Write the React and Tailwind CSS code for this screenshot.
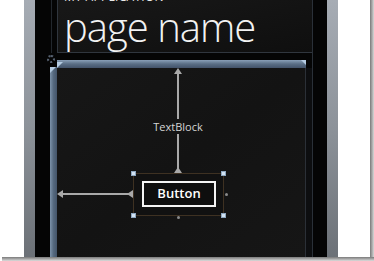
import React from 'react';

const Tri = ({ className }) => <div className={`absolute bg-[#a9a9a9] ${className}`} />;

export default function App() {
  return (
    <div className="w-[374px] h-[261px] bg-white overflow-hidden font-['Open_Sans',sans-serif]">
      <div className="w-[374px] h-[261px] flex flex-col">
        <div className="flex h-[257px]">
          <div className="w-[370px] h-full bg-white pl-[24px] flex">
            {/* phone bezel */}
            <div className="w-[314px] h-full px-[11px] bg-gradient-to-b from-[#a6acb4] via-[#8c9299] to-[#6c7177] flex">
              <div className="relative flex-1 h-full bg-[#050505] flex">
                <div className="w-[15px]" />
                <div className="w-[263px] h-full border-r border-[#2a3038] flex flex-col">
                  {/* header */}
                  <div className="h-[53px] flex ml-[1px] border-l border-[#22272d] pl-[5px]">
                    <div className="flex-1 border-l border-b border-[#30363e] bg-gradient-to-br from-[#181818] to-[#0f0f0f] overflow-hidden pl-[6px]">
                      <div className="text-[12px] leading-[12px] text-[#e8e8e8] tracking-wide mt-[-9px]">MY APPLICATION</div>
                      <div className="text-[40px] leading-[40px] font-light text-[#f2f2f2] mt-[4px] tracking-[-1px]">page name</div>
                    </div>
                  </div>
                  <div className="h-[7px]" />
                  {/* content */}
                  <div className="flex-1 flex">
                    <div className="w-[7px] flex flex-col">
                      <div className="h-[7px]" />
                      <div className="relative flex-1 bg-gradient-to-r from-[#7d93ab] via-[#55697f] to-[#44556a]">
                        <div className="absolute left-0 top-0 w-[6px] h-[6px] bg-[#b4cbe2] [clip-path:polygon(0_0,100%_0,0_100%)]" />
                      </div>
                    </div>
                    <div className="flex-1 flex flex-col">
                      <div className="relative w-[249px] h-[8px] bg-gradient-to-b from-[#8aa0b8] via-[#5a6e85] to-[#43536a]">
                        <div className="absolute left-0 top-[2px] w-[6px] h-[6px] bg-[#b4cbe2] [clip-path:polygon(0_0,100%_0,0_100%)]" />
                        <div className="absolute right-0 top-0 w-[5px] h-[5px] bg-[#b4cbe2] [clip-path:polygon(0_0,100%_0,100%_100%)]" />
                      </div>
                      <div className="flex-1 flex">
                        <div className="relative w-[249px] h-full border-r border-[#2b3037] bg-gradient-to-br from-[#171717] via-[#131313] to-[#161616]">
                          {/* vertical arrow */}
                          <div className="absolute left-[120px] top-[5px] w-[2px] h-[100px] bg-[#a9a9a9]" />
                          <Tri className="left-[117px] top-0 w-[8px] h-[6px] [clip-path:polygon(50%_0,100%_100%,0_100%)]" />
                          <div className="absolute left-[96px] top-[51px] w-[50px] h-[15px] bg-[#141414] text-center text-[11px] leading-[15px] text-[#d4d4d4]">TextBlock</div>
                          <Tri className="left-[117px] top-[99px] w-[8px] h-[6px] [clip-path:polygon(50%_0,100%_100%,0_100%)]" />
                          {/* horizontal arrow */}
                          <div className="absolute left-[5px] top-[125px] w-[70px] h-[2px] bg-[#a9a9a9]" />
                          <Tri className="left-0 top-[122px] w-[6px] h-[8px] [clip-path:polygon(0_50%,100%_0,100%_100%)]" />
                          <Tri className="left-[70px] top-[122px] w-[6px] h-[8px] [clip-path:polygon(0_50%,100%_0,100%_100%)]" />
                          {/* selection */}
                          <div className="absolute left-[76px] top-[105px] w-[91px] h-[43px] border border-[#3e3122] bg-[#111]" />
                          <div className="absolute left-[85px] top-[113px] w-[74px] h-[26px] border-2 border-[#f4f4f4] bg-[#0e0e0e] flex items-center justify-center text-[13px] font-semibold text-white">Button</div>
                          <div className="absolute left-[74px] top-[103px] w-[5px] h-[5px] bg-[#d2e2f2] border border-[#8ea7c0]" />
                          <div className="absolute left-[164px] top-[103px] w-[5px] h-[5px] bg-[#d2e2f2] border border-[#8ea7c0]" />
                          <div className="absolute left-[74px] top-[145px] w-[5px] h-[5px] bg-[#d2e2f2] border border-[#8ea7c0]" />
                          <div className="absolute left-[164px] top-[145px] w-[5px] h-[5px] bg-[#d2e2f2] border border-[#8ea7c0]" />
                          <div className="absolute left-[168px] top-[125px] w-[3px] h-[3px] rounded-full bg-[#8a8a8a]" />
                          <div className="absolute left-[120px] top-[148px] w-[3px] h-[3px] rounded-full bg-[#8a8a8a]" />
                        </div>
                        <div className="flex-1 bg-[#0d0e10]" />
                      </div>
                    </div>
                  </div>
                </div>
                <div className="flex-1" />
                {/* corner handle icon */}
                <div className="absolute left-[12px] top-[55px] w-[8px] h-[8px] rounded-full border-2 border-dotted border-[#566170]" />
              </div>
            </div>
            <div className="flex-1 bg-white" />
          </div>
          <div className="w-[4px] h-full bg-gradient-to-r from-[#7a7a7a] to-[#d8d8d8]" />
        </div>
        <div className="h-[4px] ml-[2px] bg-gradient-to-b from-[#7a7a7a] to-[#dcdcdc]" />
      </div>
    </div>
  );
}
